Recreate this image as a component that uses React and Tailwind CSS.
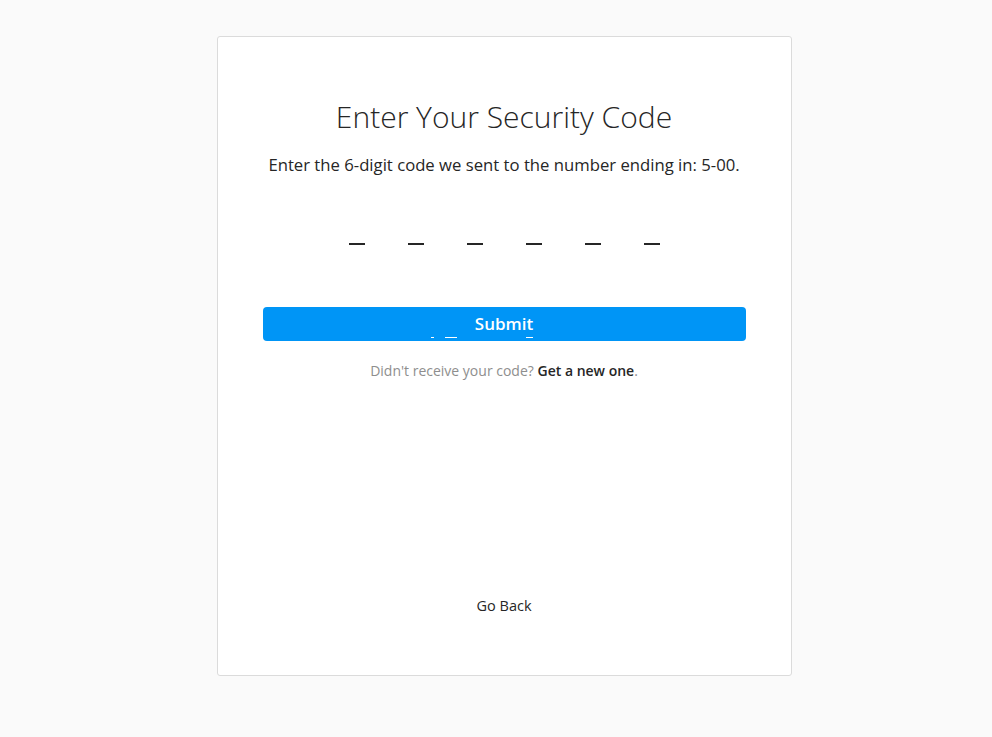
import React from "react";

const App = () => {
  const slots = [0, 1, 2, 3, 4, 5];

  return (
    <div
      className="min-h-screen w-full bg-[#fafafa] flex justify-center pt-[36px] pl-[16px]"
      style={{ fontFamily: '"Open Sans", "Noto Sans", sans-serif' }}
    >
      <div className="w-[575px] h-[640px] bg-white border border-[#dbdbdb] rounded-[3px] flex flex-col items-center px-[45px] pt-[60px] pb-[58px]">
        {/* Header */}
        <h1 className="text-[30px] leading-[40px] font-light text-[#262626]">
          Enter Your Security Code
        </h1>
        <p className="mt-[17px] text-[16.7px] leading-[22px] text-[#262626]">
          Enter the 6-digit code we sent to the number ending in: 5-00.
        </p>

        {/* Code slots */}
        <div className="mt-[67px] flex gap-[43px]">
          {slots.map((i) => (
            <div key={i} className="w-4 h-[2px] bg-[#262626]" />
          ))}
        </div>

        {/* Submit */}
        <div className="relative w-full mt-[62px]">
          <button className="w-full h-[34px] bg-[#0095f6] rounded-[4px] text-white text-[17px] font-semibold">
            Submit
          </button>
          <span className="absolute left-[168px] top-[30px] w-[3px] h-px bg-white" />
          <span className="absolute left-[182px] top-[30px] w-[12px] h-px bg-white" />
          <span className="absolute left-[263px] top-[30px] w-[7px] h-px bg-white" />
        </div>

        <p className="mt-[19px] text-[14px] text-[#8e8e8e]">
          Didn't receive your code?{" "}
          <span className="font-semibold text-[#262626]">Get a new one</span>.
        </p>

        {/* Footer */}
        <div className="mt-auto text-[14.5px] font-medium text-[#262626]">
          Go Back
        </div>
      </div>
    </div>
  );
};

export default App;
